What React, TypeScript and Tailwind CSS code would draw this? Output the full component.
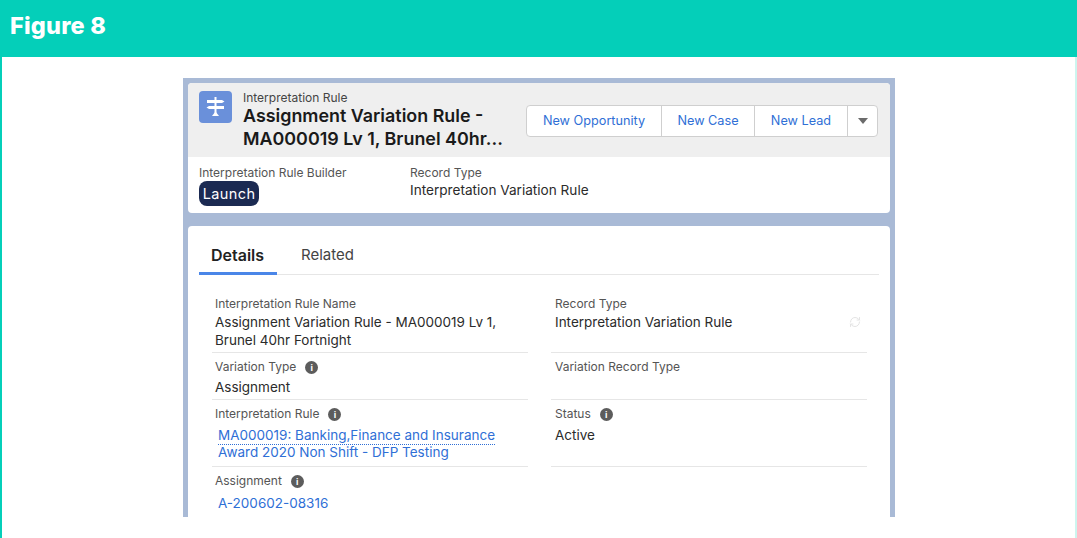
import { RefreshCw } from "lucide-react";

const sans = "font-['Inter','Liberation_Sans',sans-serif]";

function InfoDot() {
  return (
    <span className="ml-[9px] inline-flex h-[13px] w-[13px] items-center justify-center rounded-full bg-[#5c5c5c] text-[9px] font-bold leading-none text-white">
      i
    </span>
  );
}

function SignpostIcon() {
  return (
    <svg viewBox="0 0 33 32" className="mt-[1px] h-[32px] w-[33px]" aria-hidden="true">
      <rect width="33" height="32" rx="4" fill="#6a90da" />
      <rect x="15.5" y="6" width="2" height="19" fill="#fff" />
      <path d="M8 9h15l2.5 1.5L23 12H8z" fill="#fff" />
      <path d="M25 15H10l-2.5 1.5L10 18h15z" fill="#fff" />
      <path d="M16.5 20.5 20 25H13z" fill="#fff" />
    </svg>
  );
}

function Field({
  label,
  info,
  height,
  left,
  children,
}: {
  label?: string;
  info?: boolean;
  height: string;
  left?: boolean;
  children?: React.ReactNode;
}) {
  return (
    <div className={`${height} border-b border-[#e6e6e6] ${left ? "pl-[3px]" : "pl-[4px]"} pr-[4px]`}>
      {label && (
        <div className="flex h-[18px] items-center text-[12px] text-[#555]">
          {label}
          {info && <InfoDot />}
        </div>
      )}
      {children}
    </div>
  );
}

export default function App() {
  return (
    <div className={`${sans} h-[538px] w-[1077px] overflow-hidden bg-white`}>
      <header className="flex h-[57px] items-start bg-[#04cfb9] pl-[10px] pt-[11px]">
        <h1 className="text-[23.5px] font-extrabold leading-[30px] tracking-[0.2px] text-white">Figure 8</h1>
      </header>

      <div className="h-[481px] border-l-2 border-r-2 border-l-[#04cfb9] border-r-[#cdf5ef] pl-[181px] pt-[21px]">
        <div className="h-[439px] w-[712px] overflow-hidden bg-[#a9bad6] p-[5px]">
          <section className="h-[130px] overflow-hidden rounded-[4px] bg-white">
            <div className="flex h-[74px] bg-[#efefef] pl-[11px] pr-[12px] pt-[7px]">
              <SignpostIcon />
              <div className="ml-[11px] w-[283px]">
                <div className="h-[14px] text-[12px] leading-[16px] text-[#444]">Interpretation Rule</div>
                <div className="text-[17.9px] font-semibold leading-[23px] text-[#1a1a1a]">
                  Assignment Variation Rule - MA000019 Lv 1, Brunel 40hr...
                </div>
              </div>
              <div className="ml-auto mt-[15px] flex h-[32px] rounded-[4px] border border-[#cfcfcf] bg-white text-[12.7px] text-[#2f6fd6]">
                <button className="w-[135px] border-r border-[#cfcfcf]">New Opportunity</button>
                <button className="w-[93px] border-r border-[#cfcfcf]">New Case</button>
                <button className="w-[93px] border-r border-[#cfcfcf]">New Lead</button>
                <button className="flex w-[29px] items-center justify-center">
                  <span className="h-0 w-0 border-x-[5px] border-t-[6px] border-x-transparent border-t-[#6b6b6b]" />
                </button>
              </div>
            </div>
            <div className="flex pl-[11px] pt-[8px]">
              <div className="w-[211px]">
                <div className="text-[12px] leading-[16px] text-[#555]">Interpretation Rule Builder</div>
                <div className="inline-flex h-[25px] w-[60px] items-center justify-center rounded-[8px] bg-[#1b2a52] text-[14.5px] tracking-[0.4px] text-white">
                  Launch
                </div>
              </div>
              <div>
                <div className="text-[12px] leading-[16px] text-[#555]">Record Type</div>
                <div className="text-[13.6px] leading-[18px] text-[#2b2b2b]">Interpretation Variation Rule</div>
              </div>
            </div>
          </section>

          <section className="mt-[13px] h-[300px] rounded-[4px] bg-white px-[11px] pt-[13px]">
            <nav className="flex h-[36px] border-b border-[#e6e6e6]">
              <div className="h-[36px] w-[78px] border-b-[3px] border-[#4a86e8] pl-[12px] text-[16px] font-semibold leading-[32px] text-[#222]">
                Details
              </div>
              <div className="ml-[24px] text-[15px] leading-[32px] text-[#444]">Related</div>
            </nav>

            <div className="ml-[13px] mt-[20px] grid w-[655px] grid-cols-[316px_316px] gap-x-[23px]">
              <Field left label="Interpretation Rule Name" height="h-[58px]">
                <div className="text-[13.5px] leading-[18px] text-[#2b2b2b]">
                  Assignment Variation Rule - MA000019 Lv 1, Brunel 40hr Fortnight
                </div>
              </Field>
              <Field label="Record Type" height="h-[58px]">
                <div className="flex items-center justify-between pr-[2px] text-[13.5px] leading-[18px] text-[#2b2b2b]">
                  Interpretation Variation Rule
                  <RefreshCw size={12} className="text-[#e4e4e4]" />
                </div>
              </Field>

              <Field left label="Variation Type" info height="h-[47px] pt-[5px]">
                <div className="mt-[2px] text-[13.5px] leading-[18px] text-[#2b2b2b]">Assignment</div>
              </Field>
              <Field label="Variation Record Type" height="h-[47px] pt-[5px]" />

              <Field left label="Interpretation Rule" info height="h-[67px] pt-[5px]">
                <div className="ml-[3px] mt-[4px] text-[13.5px] leading-[17px] text-[#2f6fd6]">
                  <div className="-mb-px w-fit border-b border-dotted border-[#2f6fd6]">MA000019: Banking,Finance and Insurance</div>
                  <div>Award 2020 Non Shift - DFP Testing</div>
                </div>
              </Field>
              <Field label="Status" info height="h-[67px] pt-[5px]">
                <div className="mt-[3px] text-[13.5px] leading-[18px] text-[#2b2b2b]">Active</div>
              </Field>

              <div className="pl-[3px] pr-[4px] pt-[5px]">
                <div className="flex h-[18px] items-center text-[12px] text-[#555]">
                  Assignment
                  <InfoDot />
                </div>
                <div className="ml-[3px] mt-[4px] text-[13.5px] leading-[18px] text-[#2f6fd6]">A-200602-08316</div>
              </div>
            </div>
          </section>
        </div>
      </div>
    </div>
  );
}
